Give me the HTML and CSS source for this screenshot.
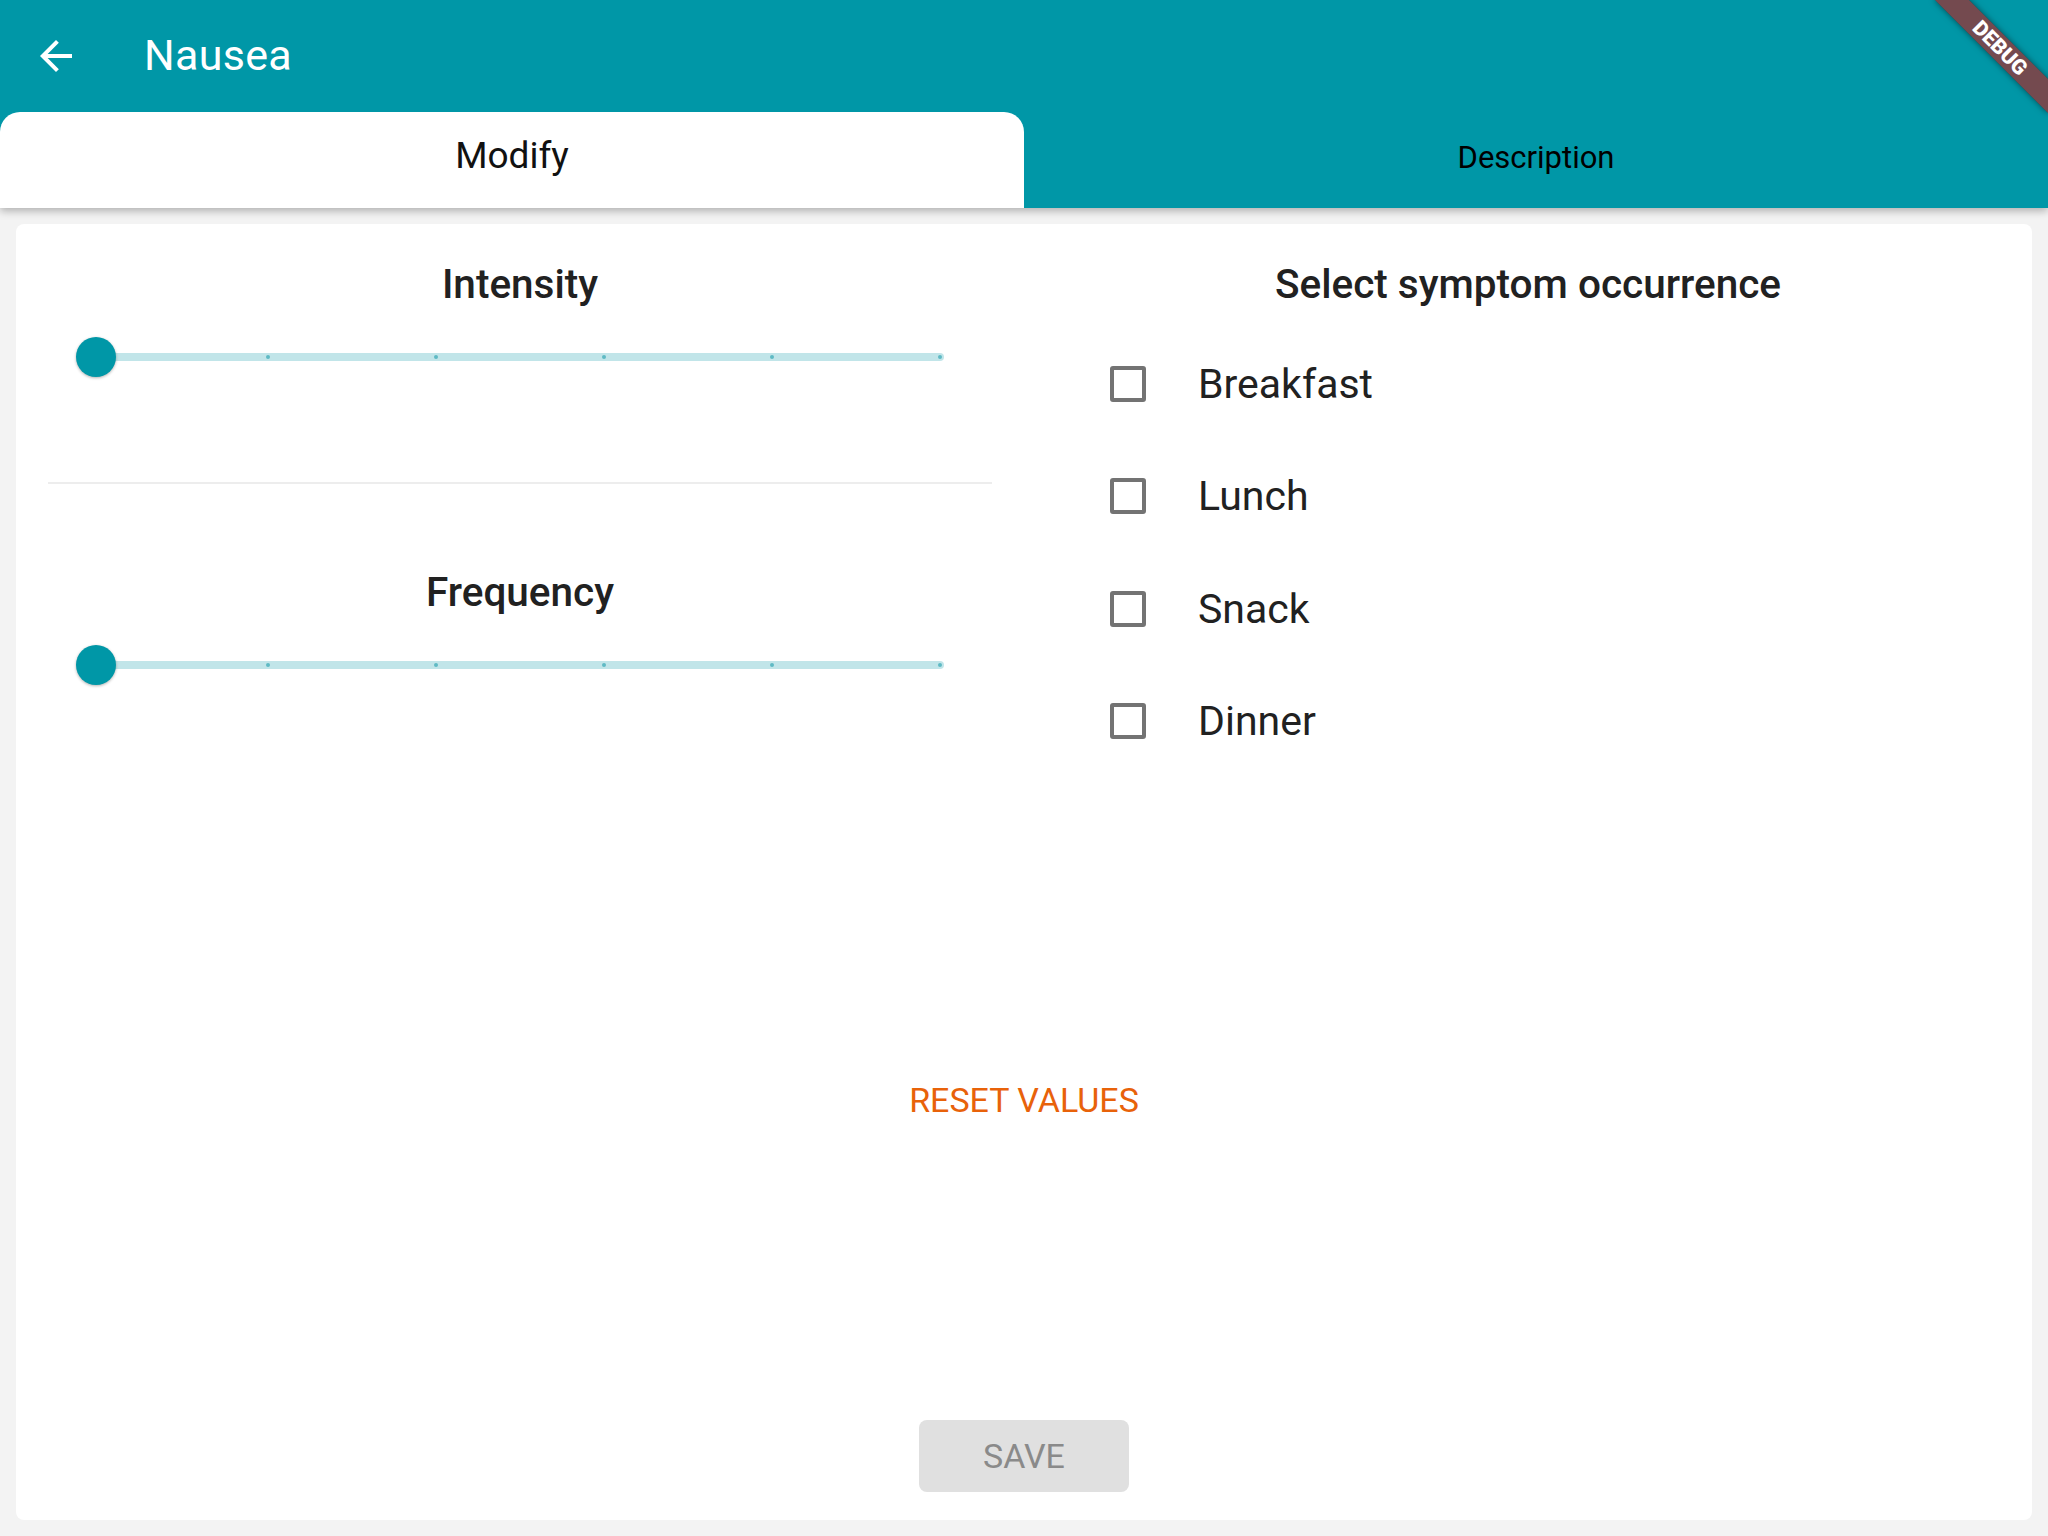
FILE: index.html
```html
<!DOCTYPE html>
<html>
<head>
<meta charset="utf-8">
<link rel="stylesheet" href="styles.css">
</head>
<body>
<div class="app">
  <header class="appbar">
    <div class="toolbar">
      <svg class="back" viewBox="0 0 24 24" width="48" height="48"><path d="M20 11H7.83l5.59-5.59L12 4l-8 8 8 8 1.41-1.41L7.83 13H20v-2z" fill="#fff"/></svg>
      <div class="title">Nausea</div>
    </div>
    <div class="tabs">
      <div class="tab active">Modify</div>
      <div class="tab">Description</div>
    </div>
  </header>
  <main class="main">
    <section class="card">
      <div class="row">
        <div class="col">
          <h2 class="heading">Intensity</h2>
          <div class="slider">
            <div class="track"><span class="tick"></span><span class="tick"></span><span class="tick"></span><span class="tick"></span><span class="tick"></span><span class="tick"></span></div>
            <div class="thumb"></div>
          </div>
          <div class="divider"></div>
          <h2 class="heading heading-second">Frequency</h2>
          <div class="slider">
            <div class="track"><span class="tick"></span><span class="tick"></span><span class="tick"></span><span class="tick"></span><span class="tick"></span><span class="tick"></span></div>
            <div class="thumb"></div>
          </div>
        </div>
        <div class="col">
          <h2 class="heading">Select symptom occurrence</h2>
          <div class="checks">
            <div class="check"><span class="box"></span><span class="label">Breakfast</span></div>
            <div class="check"><span class="box"></span><span class="label">Lunch</span></div>
            <div class="check"><span class="box"></span><span class="label">Snack</span></div>
            <div class="check"><span class="box"></span><span class="label">Dinner</span></div>
          </div>
        </div>
      </div>
      <div class="reset">RESET VALUES</div>
      <div class="save-wrap"><div class="save">SAVE</div></div>
    </section>
  </main>
  <div class="debug">DEBUG</div>
</div>
</body>
</html>
```
FILE: styles.css
```css
html, body {
  margin: 0;
  padding: 0;
}
body {
  width: 2048px;
  height: 1536px;
  overflow: hidden;
  font-family: Roboto, "Noto Sans", sans-serif;
}
.app {
  position: relative;
  width: 2048px;
  height: 1536px;
  overflow: hidden;
  background: #f3f3f3;
  display: flex;
  flex-direction: column;
}
.appbar {
  background: #0097a7;
  box-shadow: 0 3px 8px rgba(0, 0, 0, 0.28);
  position: relative;
  z-index: 2;
}
.toolbar {
  height: 112px;
  display: flex;
  align-items: center;
}
.back {
  margin-left: 32px;
  width: 48px;
  height: 48px;
  flex: none;
}
.title {
  margin-left: 64px;
  margin-bottom: 2px;
  color: #fff;
  font-size: 43px;
  font-weight: 400;
  letter-spacing: 0.3px;
}
.tabs {
  height: 96px;
  display: flex;
}
.tab {
  flex: 1;
  box-sizing: border-box;
  display: flex;
  align-items: center;
  justify-content: center;
  color: #000;
  font-size: 31px;
  padding-bottom: 6px;
}
.tab.active {
  background: #fff;
  border-radius: 20px 20px 0 0;
  font-size: 37px;
  color: #111;
  padding-bottom: 9px;
}
.main {
  flex: 1;
  display: flex;
  padding: 16px;
}
.card {
  flex: 1;
  background: #fff;
  border-radius: 8px;
  display: flex;
  flex-direction: column;
  padding-bottom: 28px;
}
.row {
  display: flex;
}
.col {
  flex: 1;
  padding: 0 32px;
}
.heading {
  margin: 36px 0 0;
  font-size: 40.5px;
  font-weight: 500;
  color: #212121;
  text-align: center;
  line-height: normal;
}
.heading-second {
  margin-top: 84px;
}
.slider {
  position: relative;
  height: 96px;
  margin-top: 1px;
  display: flex;
  align-items: center;
}
.track {
  flex: 1;
  margin: 0 48px;
  height: 8px;
  border-radius: 4px;
  background: #c1e5e9;
  display: flex;
  align-items: center;
  justify-content: space-between;
  padding: 0 2px;
}
.tick {
  width: 4px;
  height: 4px;
  border-radius: 50%;
  background: #5fbac4;
}
.thumb {
  position: absolute;
  left: 28px;
  top: 28px;
  width: 40px;
  height: 40px;
  border-radius: 50%;
  background: #0097a7;
  box-shadow: 0 1px 3px rgba(0, 0, 0, 0.3);
}
.divider {
  margin-top: 77px;
  height: 2px;
  background: #ededed;
}
.checks {
  margin-top: 20px;
}
.check {
  height: 112.3px;
  display: flex;
  align-items: center;
}
.box {
  box-sizing: border-box;
  width: 36px;
  height: 36px;
  margin-left: 54px;
  border: 4px solid #737373;
  border-radius: 3px;
  flex: none;
}
.label {
  margin-left: 52px;
  font-size: 41px;
  color: #212121;
}
.reset {
  margin-top: 303px;
  align-self: center;
  font-size: 34px;
  color: #e8620a;
  line-height: normal;
}
.save-wrap {
  margin-top: auto;
  display: flex;
  justify-content: center;
}
.save {
  width: 210px;
  height: 72px;
  border-radius: 8px;
  background: #e0e0e0;
  color: #8a8a8a;
  font-size: 34px;
  display: flex;
  align-items: center;
  justify-content: center;
}
.debug {
  position: absolute;
  left: 1920px;
  top: 36px;
  width: 160px;
  height: 24px;
  transform: rotate(45deg);
  background: rgba(183, 28, 28, 0.63);
  box-shadow: 0 0 6px rgba(0, 0, 0, 0.5);
  color: #fff;
  font-size: 21px;
  font-weight: 900;
  line-height: 24px;
  text-align: center;
  z-index: 5;
}
```
